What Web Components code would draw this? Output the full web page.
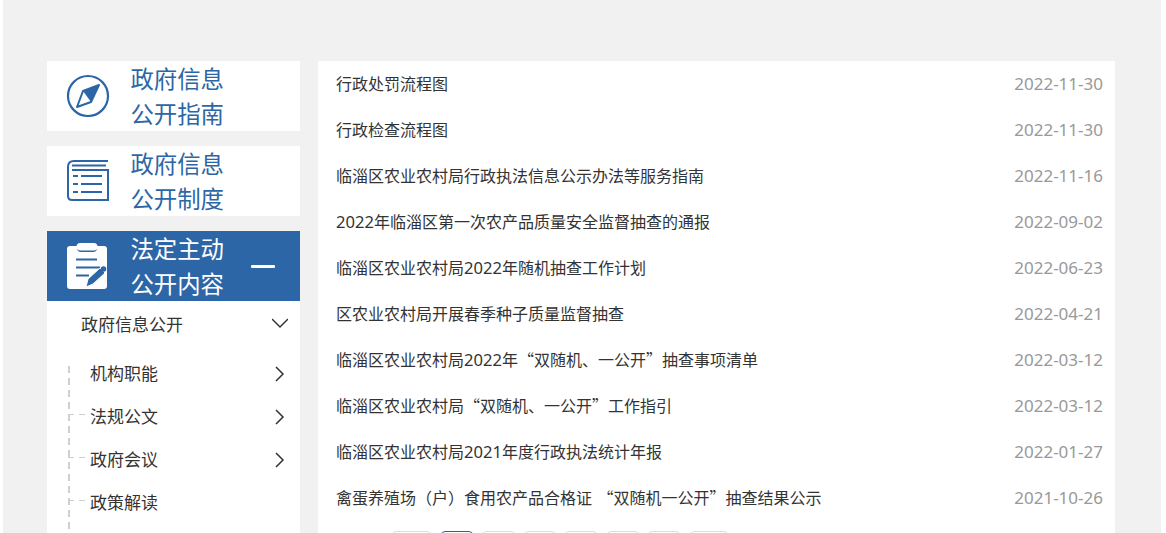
<!DOCTYPE html>
<html lang="zh"><head><meta charset="utf-8"><style>
html,body{margin:0;padding:0;height:533px;overflow:hidden;background:#fff}
body{font-family:"Noto Sans CJK SC","Liberation Sans",sans-serif}
</style></head><body>
<gov-page>
<gov-sidebar slot="side">
<gov-card label1="政府信息" label2="公开指南" icon="compass"></gov-card>
<gov-card label1="政府信息" label2="公开制度" icon="book"></gov-card>
<gov-card label1="法定主动" label2="公开内容" icon="clip" active></gov-card>
<gov-tree></gov-tree>
</gov-sidebar>
<gov-list slot="main"></gov-list>
</gov-page>
<script>
const def=(n,html)=>customElements.define(n,class extends HTMLElement{
  constructor(){super();this.attachShadow({mode:'open'}).innerHTML=typeof html==='function'?html(this):html}
});
def('gov-page',`<style>
:host{display:block;height:533px;overflow:hidden;margin:0 5px 0 3px;background:#f1f1f1}
.w{display:flex;gap:18px;padding:61px 46px 0 44px;align-items:flex-start}
::slotted([slot=side]){width:253px;flex:none}
::slotted([slot=main]){width:797px;flex:none}
</style><div class="w"><slot name="side"></slot><slot name="main"></slot></div>`);
def('gov-sidebar',`<style>:host{display:flex;flex-direction:column;gap:15px}</style><slot></slot>`);
const icons={
compass:`<svg width="44" height="44" viewBox="0 0 44 44"><circle cx="22" cy="22" r="20" fill="none" stroke="#2d66a6" stroke-width="2.2"/><path d="M33 11 L25 28 L11 33 L17 17Z" fill="#fff" stroke="#2d66a6" stroke-width="2" stroke-linejoin="round"/><path d="M33 11 L25 28 L17 17Z" fill="#2d66a6"/></svg>`,
book:`<svg width="44" height="44" viewBox="0 0 44 44"><g fill="none" stroke="#2d66a6" stroke-width="2"><path d="M42 2H8Q2 2 2 8V37Q2 41 6 41H42V11H6"/></g><path d="M6 6.500H40" stroke="#2d66a6" stroke-width="2"/><g stroke="#2d66a6" stroke-width="2"><path d="M7 17h5M7 25h5M7 33h5M15 17h21M15 25h21M15 33h21"/></g></svg>`,
clip:`<svg width="44" height="46" viewBox="0 0 44 46"><path d="M4 3H11V5Q11 9 15 9H27Q31 9 31 5V3H38Q41 3 41 6V43Q41 46 38 46H4Q1 46 1 43V6Q1 3 4 3Z" fill="#fff"/><rect x="10.500" y="0" width="21" height="7.500" rx="3.700" fill="#fff"/><path d="M10 16.500H31M10 24.500H34M10 32.500H23" stroke="#2d66a6" stroke-width="2.200"/><path d="M20 44L22 36L34 25L39 30L27 41Z" fill="#2d66a6" stroke="#fff" stroke-width="1"/><circle cx="37.500" cy="26" r="2.800" fill="#2d66a6"/></svg>`};
def('gov-card',el=>{const a=el.hasAttribute('active');return `<style>
:host{display:flex;height:70px;background:${a?'#2d66a6':'#fff'};color:${a?'#fff':'#2d66a6'};align-items:center;position:relative;overflow:hidden}
.i{width:44px;height:46px;margin-left:19px;flex:none;display:flex;align-items:center;justify-content:center}
.t{font-size:23.400px;line-height:35px;margin-left:20.400px}
.m{position:absolute;left:204px;top:34px;width:24px;height:2.500px;background:#fff;border-radius:1px}
</style><div class="i">${icons[el.getAttribute('icon')]}</div><div class="t">${el.getAttribute('label1')}<br>${el.getAttribute('label2')}</div>${a?'<div class="m"></div>':''}`});
const chev=d=>`<svg width="16" height="16" viewBox="0 0 16 16"><path d="${d}" fill="none" stroke="#333" stroke-width="1.500"/></svg>`;
def('gov-tree-row',el=>`<style>
:host{display:flex;align-items:center;justify-content:space-between;height:43px;padding:0 12px 0 0;font-size:17px;color:#333}
.t{margin-left:43px}
.c{display:flex;padding-top:2px}
</style><span class="t"><slot></slot></span><span class="c">${el.hasAttribute('arrow')?chev('M4 1L11 8L4 15'):''}</span>`);
const dash='repeating-linear-gradient(to bottom,#cfcfcf 0 7px,transparent 7px 12px)';
def('gov-tree',`<style>
:host{display:block;background:#fff;margin-top:-15px;height:240px;position:relative;overflow:hidden}
.h{display:flex;align-items:center;justify-content:space-between;height:48px;padding:0 12px 0 34px;font-size:17px;color:#333;padding-bottom:4px;box-sizing:border-box}
.rows{margin-top:2px;position:relative}
.l{position:absolute;left:21px;top:15px;bottom:-40px;width:2px;background:${dash}}
.d{position:absolute;left:21px;width:18px;height:1px;background:repeating-linear-gradient(to right,#cfcfcf 0 6px,transparent 6px 11px)}
svg{display:block}
</style>
<div class="h"><span>政府信息公开</span>${chev('M0 4L8 12L16 4')}</div>
<div class="rows"><div class="l"></div><div class="d" style="top:63px"></div><div class="d" style="top:106px"></div><div class="d" style="top:149px"></div>
<gov-tree-row arrow>机构职能</gov-tree-row><gov-tree-row arrow>法规公文</gov-tree-row><gov-tree-row arrow>政府会议</gov-tree-row><gov-tree-row>政策解读</gov-tree-row></div>`);
def('gov-row',el=>`<style>
:host{display:flex;justify-content:space-between;align-items:center;height:46px;box-sizing:border-box;padding-bottom:2px;font-size:16px;color:#333;word-spacing:2px}
.d{color:#999;font-size:17px;font-family:"Noto Sans",sans-serif;word-spacing:0}
::slotted(i){font-style:normal;font-family:"Noto Sans",sans-serif;font-size:16.600px}
</style><span><slot></slot></span><span class="d">${el.getAttribute('date')}</span>`);
def('gov-pager',`<style>
:host{display:flex;margin-left:56px;margin-top:10px}
b{display:block;height:30px;border:1px solid #ddd;border-radius:4px;box-sizing:border-box;flex:none}
b.a{border-color:#2d5f9f}
</style>`+[[39,10],[32,9],[33,9],[32,9],[32,10],[32,9],[32,10],[38,0]].map((p,i)=>`<b${i==1?' class="a"':''} style="width:${p[0]}px;margin-right:${p[1]}px"></b>`).join(''));
const rows=[["行政处罚流程图","2022-11-30"],["行政检查流程图","2022-11-30"],["临淄区农业农村局行政执法信息公示办法等服务指南","2022-11-16"],["2022年临淄区第一次农产品质量安全监督抽查的通报","2022-09-02"],["临淄区农业农村局2022年随机抽查工作计划","2022-06-23"],["区农业农村局开展春季种子质量监督抽查","2022-04-21"],["临淄区农业农村局2022年“双随机、一公开”抽查事项清单","2022-03-12"],["临淄区农业农村局“双随机、一公开”工作指引","2022-03-12"],["临淄区农业农村局2021年度行政执法统计年报","2022-01-27"],["禽蛋养殖场（户）食用农产品合格证 “双随机一公开”抽查结果公示","2021-10-26"]];
def('gov-list',`<style>:host{display:block;background:#fff;padding:0 12px 0 18px;height:480px;box-sizing:border-box}</style>`+rows.map(r=>`<gov-row date="${r[1]}">${r[0].replace(/\d{4}/g,'<i>$&</i>')}</gov-row>`).join('')+`<gov-pager></gov-pager>`);
</script>
</body></html>
